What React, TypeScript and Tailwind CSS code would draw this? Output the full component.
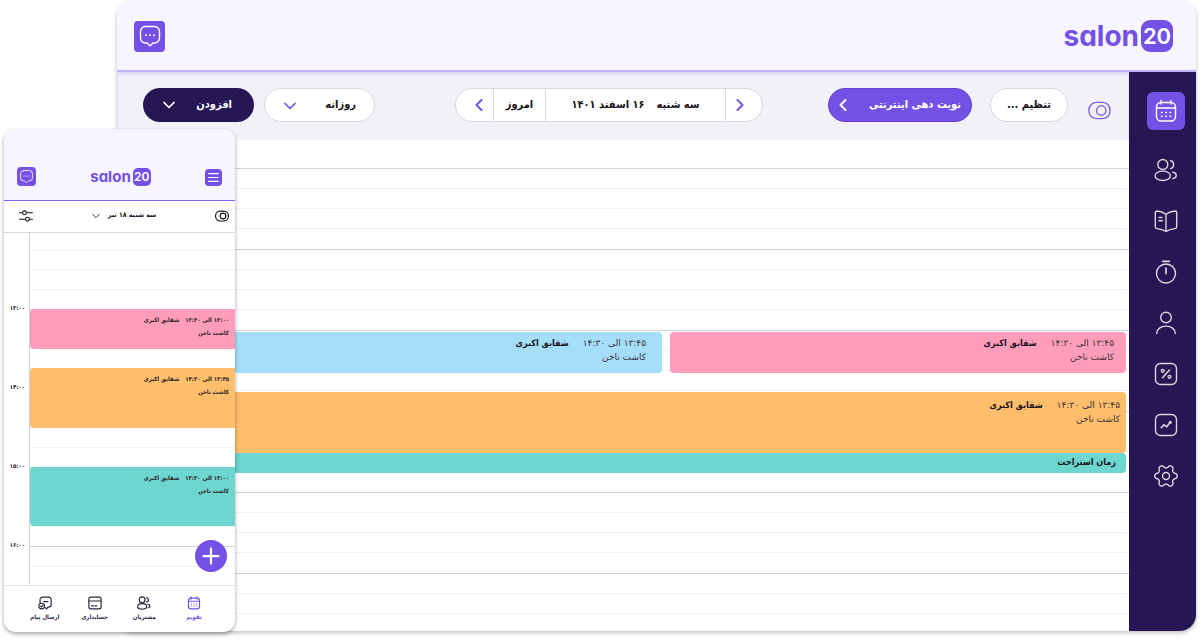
import type { ReactNode } from 'react';

type IconProps = { className?: string };

function Svg({ className = 'size-6', width = 1.4, children }: { className?: string; width?: number; children: ReactNode }) {
  return (
    <svg
      viewBox="0 0 24 24"
      className={className}
      fill="none"
      stroke="currentColor"
      strokeWidth={width}
      strokeLinecap="round"
      strokeLinejoin="round"
      aria-hidden="true"
    >
      {children}
    </svg>
  );
}

const CalendarIcon = ({ className }: IconProps) => (
  <Svg className={className}>
    <rect x="2.5" y="3.5" width="19" height="18.5" rx="4.5" />
    <path d="M2.5 9h19M7 1.5v3.5M17 1.5v3.5" />
    <path d="M7.5 13.5h.6M11.8 13.5h.6M16 13.5h.6M7.5 17.2h.6M11.8 17.2h.6M16 17.2h.6" strokeWidth="1.6" />
  </Svg>
);

const UsersIcon = ({ className }: IconProps) => (
  <Svg className={className}>
    <circle cx="8.8" cy="6.5" r="5" />
    <ellipse cx="8.8" cy="17.8" rx="7.7" ry="4.7" />
    <path d="M16.5 2.800a4 4 0 0 1 0 7.800M18.800 14.300c4.600.8 4.600 5.500 0 6.300" />
  </Svg>
);

const BookIcon = ({ className }: IconProps) => (
  <Svg className={className}>
    <path d="M12 5.200C9.500 3.400 6.500 2.300 3 2c-1 0-1.700.6-1.700 1.600v14.200c0 1 .6 1.600 1.600 1.800 3.500.4 6.300 1.200 9.100 2.900 2.800-1.700 5.600-2.500 9.100-2.900 1-.2 1.600-.8 1.600-1.800V3.600C22.700 2.600 22 2 21 2c-3.500.3-6.500 1.400-9 3.200zM12 5.200v17.300" />
    <path d="M5 8.500h3M5 11.800h3.500" />
  </Svg>
);

const TimerIcon = ({ className }: IconProps) => (
  <Svg className={className}>
    <circle cx="12" cy="13.500" r="9.500" />
    <path d="M12 8v5.500M8.700 1.300h6.600" strokeWidth="1.700" />
  </Svg>
);

const UserIcon = ({ className }: IconProps) => (
  <Svg className={className}>
    <circle cx="12" cy="6.500" r="5.300" />
    <path d="M2.700 22.500c0-4.600 4.200-7.400 9.300-7.400s9.300 2.800 9.300 7.400" />
  </Svg>
);

const PercentIcon = ({ className }: IconProps) => (
  <Svg className={className}>
    <rect x="1.500" y="1.500" width="21" height="21" rx="5" />
    <path d="M8.500 15.700L15.500 8" strokeWidth="1.600" />
    <circle cx="8.700" cy="8.800" r="1.400" />
    <circle cx="15.500" cy="14.800" r="1.400" />
  </Svg>
);

const TrendIcon = ({ className }: IconProps) => (
  <Svg className={className}>
    <rect x="1.500" y="1.500" width="21" height="21" rx="5" />
    <path d="M7.300 14.700l2.500-3 2.900 2.100 3.300-4.300" strokeWidth="1.600" />
    <circle cx="16.300" cy="9.300" r=".9" fill="currentColor" />
  </Svg>
);

// Six-lobed outline traced as a sine wave around a circle.
const gearOutline =
  'M' +
  Array.from({ length: 120 }, (_, i) => {
    const angle = (i / 120) * Math.PI * 2;
    const wave = Math.cos(6 * angle);
    const radius = 9.7 + 1.5 * Math.sign(wave) * Math.sqrt(Math.abs(wave));
    return `${(12 + radius * Math.cos(angle)).toFixed(2)} ${(12 + radius * Math.sin(angle)).toFixed(2)}`;
  }).join('L') +
  'Z';

const GearIcon = ({ className }: IconProps) => (
  <Svg className={className}>
    <circle cx="12" cy="12" r="3.500" />
    <path d={gearOutline} />
  </Svg>
);

const ChatIcon = ({ className }: IconProps) => (
  <Svg className={className}>
    <path d="M7.500 2.500h9a5 5 0 0 1 5 5v6.500a5 5 0 0 1-5 5h-1c-.7 0-1.200.4-1.600.9l-1.100 1.300c-.4.600-1.200.600-1.600 0l-1.100-1.300c-.4-.5-.9-.9-1.600-.9h-1a5 5 0 0 1-5-5V7.500a5 5 0 0 1 5-5z" />
    <path d="M8 11.200h.3M11.900 11.200h.3M15.800 11.200h.3" strokeWidth="1.700" />
  </Svg>
);

const ToggleIcon = ({ className }: IconProps) => (
  <Svg className={className} width={1.5}>
    <rect x="1" y="3.500" width="22" height="17" rx="8" />
    <circle cx="13.800" cy="12" r="4.900" />
  </Svg>
);

const SlidersIcon = ({ className }: IconProps) => (
  <Svg className={className} width={1.8}>
    <path d="M1 6.500h5M13 6.500h10M1 17.500h10M18 17.500h5" />
    <circle cx="9.500" cy="6.500" r="3.300" />
    <circle cx="14.500" cy="17.500" r="3.300" />
  </Svg>
);

const CardIcon = ({ className }: IconProps) => (
  <Svg className={className}>
    <rect x="1.500" y="2" width="21" height="20" rx="3.500" />
    <path d="M1.500 8.500h21M6 16.800h3.500M12 16.800h3" />
  </Svg>
);

const SendIcon = ({ className }: IconProps) => (
  <Svg className={className}>
    <path d="M3.500 11V6.500a4.500 4.500 0 0 1 4.500-4.500h10a4.500 4.500 0 0 1 4.500 4.500v8a4.500 4.500 0 0 1-4.500 4.500h-1l-2.500 3.300-2-2.500M10 9.500h7" />
    <circle cx="6.300" cy="17.300" r="4.900" />
    <path d="M4.500 17.300l1.500 1.500 2.800-3" />
  </Svg>
);

const MenuIcon = ({ className }: IconProps) => (
  <Svg className={className} width={2.4}>
    <path d="M1.500 3.500h21M1.500 12h21M1.500 20.500h21" />
  </Svg>
);

const PlusIcon = ({ className }: IconProps) => (
  <Svg className={className} width={3}>
    <path d="M12 2v20M2 12h20" />
  </Svg>
);

const ChevronDown = ({ className }: IconProps) => (
  <Svg className={className} width={3.5}>
    <path d="M2 7l10 10L22 7" />
  </Svg>
);

const ChevronLeft = ({ className }: IconProps) => (
  <Svg className={className} width={4}>
    <path d="M17 2L7 12l10 10" />
  </Svg>
);

const ChevronRight = ({ className }: IconProps) => (
  <Svg className={className} width={4}>
    <path d="M7 2l10 10L7 22" />
  </Svg>
);

const navigation = [
  { label: 'مشتریان', Icon: UsersIcon },
  { label: 'خدمات', Icon: BookIcon },
  { label: 'ساعت کاری', Icon: TimerIcon },
  { label: 'پرسنل', Icon: UserIcon },
  { label: 'تخفیف', Icon: PercentIcon },
  { label: 'گزارش', Icon: TrendIcon },
  { label: 'تنظیمات', Icon: GearIcon },
];

const tabs = [
  { label: 'تقویم', Icon: CalendarIcon, active: true },
  { label: 'مشتریان', Icon: UsersIcon, active: false },
  { label: 'حسابداری', Icon: CardIcon, active: false },
  { label: 'ارسال پیام', Icon: SendIcon, active: false },
];

function Logo({ small = false }: { small?: boolean }) {
  return (
    <a
      href="#home"
      dir="ltr"
      className={`flex items-center gap-0.5 font-[Inter,sans-serif] font-bold text-[#7451e5] [font-feature-settings:'cv11'] ${
        small ? 'text-[15px] leading-4' : 'text-[28px] leading-8'
      }`}
    >
      <span>salon</span>
      <span
        className={`flex items-center justify-center bg-[#7451e5] font-semibold text-white ${
          small ? 'size-[18px] rounded-[5px] text-[12px]' : 'size-8 rounded-[9px] text-[22px]'
        }`}
      >
        20
      </span>
    </a>
  );
}

function Hour({ small = false }: { small?: boolean }) {
  return (
    <div
      className={`grid shrink-0 grid-rows-4 divide-y divide-[#f2f2f4] border-t border-[#d2d2d5] ${small ? 'h-[79px]' : 'h-[81px]'}`}
    >
      <div />
      <div />
      <div />
      <div />
    </div>
  );
}

function Booking({ className, time }: { className: string; time: string }) {
  return (
    <article className={`rounded-sm text-[9px] leading-[14px] text-[#3b3338] ${className}`}>
      <div className="flex gap-3.5">
        <span className="font-['DejaVu_Sans',sans-serif]">{time}</span>
        <strong className="text-[#17131c]">شقایق اکبری</strong>
      </div>
      <p className="font-['DejaVu_Sans',sans-serif]">کاشت ناخن</p>
    </article>
  );
}

function MobileBooking({ className, time }: { className: string; time: string }) {
  return (
    <article className={`rounded-e-sm px-1.5 pt-1 text-[6px] leading-[13px] font-bold text-[#2b2228] ${className}`}>
      <div className="flex gap-1.5">
        <span>{time}</span>
        <span>شقایق اکبری</span>
      </div>
      <p>کاشت ناخن</p>
    </article>
  );
}

function Desktop() {
  return (
    <section className="ms-[5px] me-[117px] flex h-[631px] flex-col overflow-hidden rounded-2xl bg-white shadow-[0_2px_4px_rgba(0,0,0,0.25)]">
      <header className="flex h-[72px] shrink-0 items-center justify-between border-b-2 border-[#c2b3fa] bg-[#f7f5ff] ps-[23px] pe-[17px] pt-0.5">
        <Logo />
        <button aria-label="پیام‌ها" className="flex size-[31px] items-center justify-center rounded-sm bg-[#7451e5] text-white">
          <ChatIcon className="size-6" />
        </button>
      </header>

      <div className="flex min-h-0 flex-1">
        <nav className="flex w-[67px] shrink-0 flex-col items-center bg-[#251654] pt-5 pl-[6px] text-[#d9d5df]">
          <a href="#calendar" aria-label="تقویم" className="mb-[14px] flex size-[38px] items-center justify-center rounded-md bg-[#7451e5] text-white">
            <CalendarIcon className="size-6" />
          </a>
          {navigation.map(({ label, Icon }) => (
            <a key={label} href="#section" aria-label={label} className="flex h-[51px] items-center">
              <Icon className="size-6" />
            </a>
          ))}
        </nav>

        <main className="flex min-w-0 flex-1 flex-col">
          <div className="flex h-[68px] shrink-0 items-center bg-[#f2f1f7] ps-[18px] pe-[26px] pb-0.5 text-[11px] font-bold text-[#17131c] shadow-[inset_0_3px_3px_rgba(194,179,250,0.35)]">
            <button aria-label="نمایش" className="mt-2.5 text-[#7f63ea]">
              <ToggleIcon className="size-[23px]" />
            </button>
            <button className="ms-5 h-[34px] w-[78px] rounded-full border border-[#d8d7dc] bg-white">تنظیم ...</button>
            <button className="ms-[18px] flex h-[34px] w-36 items-center justify-between rounded-full border border-[#6440cf] bg-[#7451e5] ps-2.5 pe-2 text-white">
              <span>نوبت دهی اینترنتی</span>
              <ChevronLeft className="size-3" />
            </button>

            <div className="ms-[65px] flex h-[34px] w-[308px] divide-x divide-[#d8d7dc] overflow-hidden rounded-full border border-[#d8d7dc] bg-white">
              <button aria-label="روز قبل" className="flex w-[37px] items-center justify-center text-[#7451e5]">
                <ChevronRight className="ms-2 size-3" />
              </button>
              <button className="flex flex-1 items-center justify-center gap-3">
                <span>سه شنبه</span>
                <span>۱۶ اسفند ۱۴۰۱</span>
              </button>
              <button className="w-[52px]">امروز</button>
              <button aria-label="روز بعد" className="flex w-[37px] items-center justify-center text-[#7451e5]">
                <ChevronLeft className="me-2 size-3" />
              </button>
            </div>

            <div className="relative ms-auto">
              <select
                aria-label="نوع نمایش"
                className="h-[34px] w-[111px] appearance-none rounded-full border border-[#d8d7dc] bg-white ps-[18px] text-[11px] font-bold"
              >
                <option>روزانه</option>
                <option>هفتگی</option>
              </select>
              <ChevronDown className="pointer-events-none absolute end-5 top-3 size-3 text-[#7451e5]" />
            </div>
            <button className="ms-2.5 flex h-[34px] w-[111px] items-center justify-between rounded-full bg-[#251654] ps-[22px] pe-5 text-white">
              <span>افزودن</span>
              <ChevronDown className="size-3" />
            </button>
          </div>

          <div className="relative flex min-h-0 flex-1 flex-col overflow-hidden pt-7">
            <Hour />
            <Hour />
            <Hour />
            <Hour />
            <Hour />
            <Hour />
            <div className="absolute inset-0 flex flex-col ps-[3px] pt-48">
              <div className="flex gap-2">
                <Booking time="۱۳:۴۵ الی ۱۴:۳۰" className="h-[41px] flex-1 bg-[#ff9dba] px-3 pt-1" />
                <Booking time="۱۳:۴۵ الی ۱۴:۳۰" className="h-[41px] w-[545px] bg-[#a5def8] px-4 pt-1" />
              </div>
              <Booking time="۱۳:۴۵ الی ۱۴:۳۰" className="mt-[19px] h-[61px] bg-[#ffbe6c] px-1.5 pt-1.5" />
              <article className="h-5 rounded-sm bg-[#6dd6cf] px-2.5 text-[9px] leading-[18px] font-bold text-[#17131c]">
                زمان استراحت
              </article>
            </div>
          </div>
        </main>
      </div>
    </section>
  );
}

function Mobile() {
  return (
    <section className="absolute top-[129px] left-1 flex h-[503px] w-[231px] flex-col overflow-hidden rounded-xl bg-white text-[#17131c] shadow-[0_2px_4px_rgba(0,0,0,0.35)]">
      <header className="flex h-[72px] shrink-0 items-end justify-between border-b border-[#7f63ea] bg-[#f7f5ff] px-[13px] pb-3.5">
        <button aria-label="منو" className="flex size-[17px] items-center justify-center rounded-sm bg-[#7451e5] text-white">
          <MenuIcon className="size-[11px]" />
        </button>
        <Logo small />
        <button aria-label="پیام‌ها" className="flex size-[19px] items-center justify-center rounded-sm bg-[#7451e5] text-white">
          <ChatIcon className="size-[15px]" />
        </button>
      </header>

      <div className="flex h-8 shrink-0 items-center justify-between border-b border-[#d8d7dc] ps-1.5 pe-[15px] pb-0.5">
        <button aria-label="نمایش">
          <ToggleIcon className="size-3.5 stroke-2" />
        </button>
        <button className="flex items-center gap-2 text-[7px] font-bold">
          <span>سه شنبه ۱۸ تیر</span>
          <ChevronDown className="size-2 stroke-[2.5px]" />
        </button>
        <button aria-label="فیلتر">
          <SlidersIcon className="size-3.5" />
        </button>
      </div>

      <div className="relative flex min-h-0 flex-1">
        <div className="relative flex flex-1 flex-col overflow-hidden border-e border-[#d2d2d5]">
          <div className="-mt-0.5 grid h-[78px] shrink-0 grid-rows-4 divide-y divide-[#f2f2f4]">
            <div />
            <div />
            <div />
            <div />
          </div>
          <Hour small />
          <Hour small />
          <Hour small />
          <Hour small />
          <div className="absolute inset-0 flex flex-col pt-[76px]">
            <MobileBooking time="۱۳:۰۰ الی ۱۳:۳۰" className="h-10 bg-[#ff9dba]" />
            <MobileBooking time="۱۳:۴۵ الی ۱۴:۳۰" className="mt-[19px] h-[60px] bg-[#ffbe6c]" />
            <MobileBooking time="۱۳:۰۰ الی ۱۳:۳۰" className="mt-[39px] h-[59px] bg-[#6dd6cf]" />
          </div>
        </div>
        <div className="w-[25px] shrink-0 ps-1 pt-[70px] text-[6px] leading-[10px] font-bold">
          <div className="h-[79px]">۱۳:۰۰</div>
          <div className="h-[79px]">۱۴:۰۰</div>
          <div className="h-[79px]">۱۵:۰۰</div>
          <div>۱۶:۰۰</div>
        </div>
        <button
          aria-label="افزودن نوبت"
          className="absolute right-2 bottom-[13px] flex size-8 items-center justify-center rounded-full bg-[#7451e5] text-white"
        >
          <PlusIcon className="size-[18px]" />
        </button>
      </div>

      <nav className="flex h-[47px] shrink-0 justify-between border-t border-[#e2e1e5] px-4 pt-2.5">
        {tabs.map(({ label, Icon, active }) => (
          <a
            key={label}
            href="#tab"
            className={`flex w-[50px] flex-col items-center gap-0.5 text-[6px] leading-[10px] font-bold ${active ? 'text-[#7451e5]' : 'text-[#2b2440]'}`}
          >
            <Icon className="size-3.5 stroke-2" />
            <span>{label}</span>
          </a>
        ))}
      </nav>
    </section>
  );
}

export default function App() {
  return (
    <div
      dir="rtl"
      lang="fa"
      className="relative min-h-screen overflow-hidden bg-white font-['DejaVu_Sans_Condensed','DejaVu_Sans',sans-serif]"
    >
      <Desktop />
      <Mobile />
    </div>
  );
}
